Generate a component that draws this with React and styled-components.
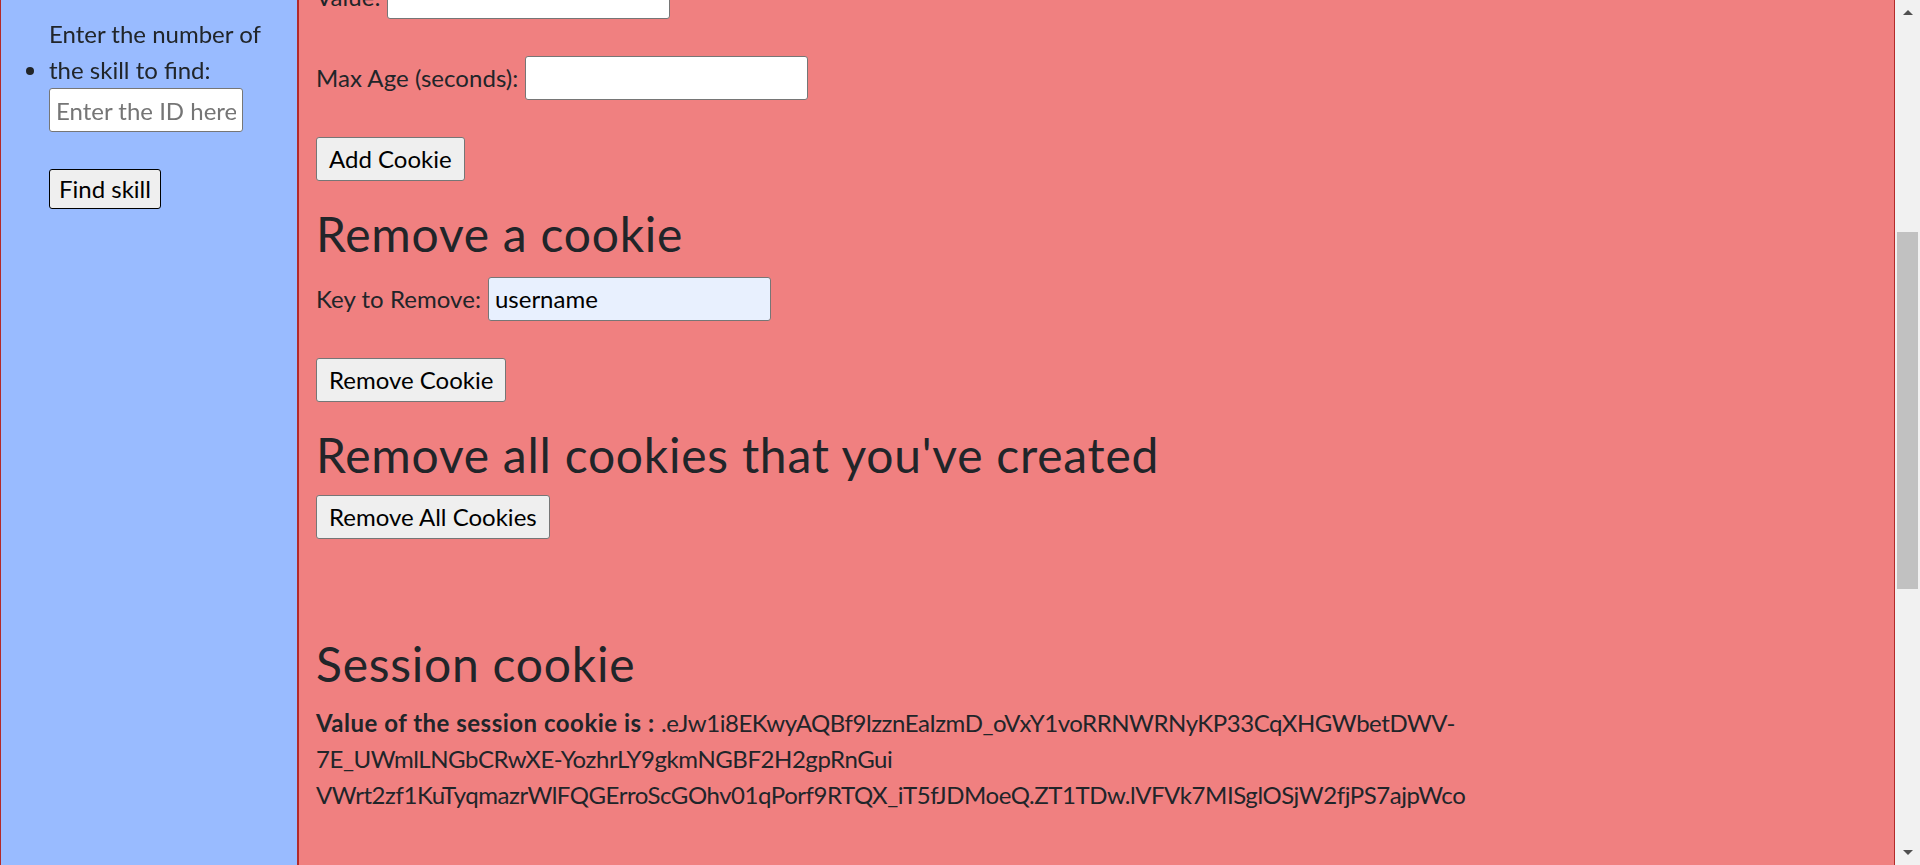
import React, { useLayoutEffect, useRef } from 'react';
import styled, { createGlobalStyle } from 'styled-components';

const GlobalStyle = createGlobalStyle`
  *, *::before, *::after {
    box-sizing: border-box;
  }
  html, body {
    margin: 0;
    height: 100%;
    overflow: hidden;
  }
  body {
    font-family: Lato, "Noto Sans", sans-serif;
    font-size: 24px;
    line-height: 1.5;
    color: #212529;
  }
`;

const Screen = styled.div`
  display: flex;
  height: 100vh;
  overflow: hidden;
`;

const ScrollArea = styled.div`
  flex: 1;
  min-width: 0;
  overflow-y: scroll;
  scrollbar-width: none;
  &::-webkit-scrollbar {
    display: none;
  }
`;

const Layout = styled.div`
  display: flex;
  min-height: 1975px;
`;

const Sidebar = styled.aside`
  flex: none;
  width: 298px;
  background: #99bbff;
  border-left: 1px solid #b32a2a;
  border-right: 1px solid #b32a2a;
`;

const SidebarInner = styled.div`
  position: sticky;
  top: 0;
  padding-top: 16px;
`;

const SkillList = styled.ul`
  margin: 0;
  padding-left: 48px;
  list-style: disc;
  line-height: 36px;
`;

const SkillLabel = styled.label`
  display: inline-block;
`;

const SkillInput = styled.input`
  width: 194px;
  height: 44px;
  padding: 0 6px;
  font: inherit;
  color: #000;
  background: #fff;
  border: 1px solid #767676;
  border-radius: 3px;
  &::placeholder {
    color: #757575;
  }
`;

const FindButton = styled.button`
  height: 40px;
  margin-top: 1px;
  padding: 0 9px;
  font: inherit;
  line-height: 1;
  color: #000;
  background: #efefef;
  border: 1px solid #000;
  border-radius: 3px;
`;

const Main = styled.main`
  flex: 1;
  min-width: 0;
  padding: 104px 17px 0;
  background: #f08080;
  border-left: 1px solid #b32a2a;
  border-right: 1px solid #b32a2a;
`;

const Heading = styled.h2`
  margin: 0 0 12px;
  font-size: 48px;
  font-weight: 400;
  line-height: 1.2;
  letter-spacing: 0.75px;
`;

const Field = styled.div`
  display: flex;
  align-items: center;
  gap: 7px;
  height: 46px;
  padding-top: 2px;
  margin-bottom: 35px;
  line-height: 36px;
  letter-spacing: 0.05px;
`;

const TextInput = styled.input`
  width: 283px;
  height: 44px;
  padding: 0 6px;
  font: inherit;
  letter-spacing: normal;
  color: #000;
  background: ${p => (p.$filled ? '#e8f0fe' : '#fff')};
  border: 1px solid #767676;
  border-radius: 3px;
`;

const Actions = styled.div`
  padding-top: ${p => p.$pad}px;
  margin-bottom: ${p => p.$gap}px;
`;

const ActionButton = styled.button`
  display: block;
  height: 44px;
  padding: 0 12px;
  font: inherit;
  line-height: 1;
  color: #000;
  background: #efefef;
  border: 1px solid #767676;
  border-radius: 3px;
`;

const CookieValue = styled.p`
  margin: 0 0 24px;
  line-height: 36px;
  letter-spacing: -0.45px;
  strong {
    font-weight: 700;
    letter-spacing: 0.5px;
  }
`;

const Scrollbar = styled.div`
  flex: none;
  width: 25px;
  display: flex;
  flex-direction: column;
  background: #f1f1f1;
`;

const ScrollButton = styled.div`
  height: 25px;
  display: flex;
  justify-content: center;
  align-items: flex-start;
  padding-top: 10px;
`;

const Arrow = styled.span`
  width: 0;
  height: 0;
  border-left: 5.5px solid transparent;
  border-right: 5.5px solid transparent;
  ${p => (p.$down ? 'border-top' : 'border-bottom')}: 5px solid #505050;
`;

const Track = styled.div`
  flex: 1;
  padding: ${p => p.$offset}px 2px 0;
`;

const Thumb = styled.div`
  height: 357px;
  background: #c1c1c1;
`;

const SESSION_LINES = [
  '.eJw1i8EKwyAQBf9lzznEaIzmD_oVxY1voRRNWRNyKP33CqXHGWbetDWV-',
  '7E_UWmlLNGbCRwXE-YozhrLY9gkmNGBF2H2gpRnGui',
  'VWrt2zf1KuTyqmazrWlFQGErroScGOhv01qPorf9RTQX_iT5fJDMoeQ.ZT1TDw.lVFVk7MISglOSjW2fjPS7ajpWco',
];

const App = () => {
  const scrollRef = useRef(null);

  useLayoutEffect(() => {
    if (scrollRef.current) scrollRef.current.scrollTop = 502;
  }, []);

  return (
    <>
      <GlobalStyle />
      <Screen>
        <ScrollArea ref={scrollRef}>
          <Layout>
            <Sidebar>
              <SidebarInner>
                <SkillList>
                  <li>
                    <SkillLabel htmlFor="skill-id">Enter the number of the skill to find:</SkillLabel>
                    <SkillInput id="skill-id" placeholder="Enter the ID here" />
                    <br />
                    <br />
                    <FindButton>Find skill</FindButton>
                  </li>
                </SkillList>
              </SidebarInner>
            </Sidebar>

            <Main>
              <Heading>Get a cookie</Heading>
              <Field>
                <label htmlFor="get-key">Key:</label>
                <TextInput id="get-key" />
              </Field>
              <Actions $pad={2} $gap={24}>
                <ActionButton>Get Cookie</ActionButton>
              </Actions>

              <Heading>Add a cookie</Heading>
              <Field>
                <label htmlFor="add-key">Key:</label>
                <TextInput id="add-key" />
              </Field>
              <Field>
                <label htmlFor="add-value">Value:</label>
                <TextInput id="add-value" />
              </Field>
              <Field>
                <label htmlFor="add-age">Max Age (seconds):</label>
                <TextInput id="add-age" />
              </Field>
              <Actions $pad={2} $gap={24}>
                <ActionButton>Add Cookie</ActionButton>
              </Actions>

              <Heading>Remove a cookie</Heading>
              <Field>
                <label htmlFor="remove-key">Key to Remove:</label>
                <TextInput id="remove-key" $filled defaultValue="username" />
              </Field>
              <Actions $pad={2} $gap={24}>
                <ActionButton>Remove Cookie</ActionButton>
              </Actions>

              <Heading>Remove all cookies that you've created</Heading>
              <Actions $pad={0} $gap={96}>
                <ActionButton>Remove All Cookies</ActionButton>
              </Actions>

              <Heading>Session cookie</Heading>
              <CookieValue>
                <strong>Value of the session cookie is : </strong>
                {SESSION_LINES[0]}
                <br />
                {SESSION_LINES[1]}
                <br />
                {SESSION_LINES[2]}
              </CookieValue>
            </Main>
          </Layout>
        </ScrollArea>

        <Scrollbar>
          <ScrollButton>
            <Arrow />
          </ScrollButton>
          <Track $offset={207}>
            <Thumb />
          </Track>
          <ScrollButton>
            <Arrow $down />
          </ScrollButton>
        </Scrollbar>
      </Screen>
    </>
  );
};

export default App;
